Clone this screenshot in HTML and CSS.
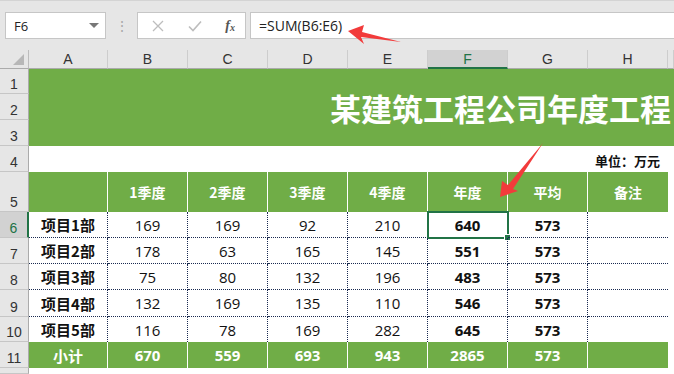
FILE: index.html
```html
<!DOCTYPE html>
<html lang="zh-CN">
<head>
  <meta charset="UTF-8" />
  <title>年度工程统计</title>
  <link rel="stylesheet" href="styles.css">
</head>
<body>

  <div class="toolbar">
    <div class="name-box">
      <span>F6</span>
      <span class="caret"></span>
    </div>
    <div class="grip">⋮</div>
    <div class="fx-buttons">
      <svg width="12" height="12" viewBox="0 0 12 12"><path d="M1 1L11 11M11 1L1 11" stroke="#bdbdbd" stroke-width="1.3" fill="none"/></svg>
      <svg width="14" height="12" viewBox="0 0 14 12"><path d="M1 6.5L5 10.5L13 1.5" stroke="#bdbdbd" stroke-width="1.6" fill="none"/></svg>
      <span class="fx">f<sub>x</sub></span>
    </div>
    <div class="formula">=SUM(B6:E6)</div>
  </div>

  <div class="sheet">
    <div class="corner"><span class="corner-tri"></span></div>
    <div class="col-head">A</div>
    <div class="col-head">B</div>
    <div class="col-head">C</div>
    <div class="col-head">D</div>
    <div class="col-head">E</div>
    <div class="col-head active">F</div>
    <div class="col-head">G</div>
    <div class="col-head">H</div>
    <div class="col-head"></div>

    <div class="row-head">1</div>
    <div class="title">某建筑工程公司年度工程</div>
    <div class="row-head">2</div>
    <div class="row-head">3</div>

    <div class="row-head">4</div>
    <div class="unit">单位：万元</div>

    <div class="row-head">5</div>
    <div class="hd"></div>
    <div class="hd">1季度</div>
    <div class="hd">2季度</div>
    <div class="hd">3季度</div>
    <div class="hd">4季度</div>
    <div class="hd">年度</div>
    <div class="hd">平均</div>
    <div class="hd last">备注</div>
    <div class="blank"></div>

    <div class="row-head active">6</div>
    <div class="c name">项目1部</div>
    <div class="c">169</div>
    <div class="c">169</div>
    <div class="c">92</div>
    <div class="c">210</div>
    <div class="c bold selected">640<span class="handle"></span></div>
    <div class="c bold">573</div>
    <div class="c last"></div>
    <div class="blank"></div>

    <div class="row-head">7</div>
    <div class="c name">项目2部</div>
    <div class="c">178</div>
    <div class="c">63</div>
    <div class="c">165</div>
    <div class="c">145</div>
    <div class="c bold">551</div>
    <div class="c bold">573</div>
    <div class="c last"></div>
    <div class="blank"></div>

    <div class="row-head">8</div>
    <div class="c name">项目3部</div>
    <div class="c">75</div>
    <div class="c">80</div>
    <div class="c">132</div>
    <div class="c">196</div>
    <div class="c bold">483</div>
    <div class="c bold">573</div>
    <div class="c last"></div>
    <div class="blank"></div>

    <div class="row-head">9</div>
    <div class="c name">项目4部</div>
    <div class="c">132</div>
    <div class="c">169</div>
    <div class="c">135</div>
    <div class="c">110</div>
    <div class="c bold">546</div>
    <div class="c bold">573</div>
    <div class="c last"></div>
    <div class="blank"></div>

    <div class="row-head">10</div>
    <div class="c name end">项目5部</div>
    <div class="c end">116</div>
    <div class="c end">78</div>
    <div class="c end">169</div>
    <div class="c end">282</div>
    <div class="c bold end">645</div>
    <div class="c bold end">573</div>
    <div class="c last end"></div>
    <div class="blank"></div>

    <div class="row-head">11</div>
    <div class="hd total">小计</div>
    <div class="hd total">670</div>
    <div class="hd total">559</div>
    <div class="hd total">693</div>
    <div class="hd total">943</div>
    <div class="hd total">2865</div>
    <div class="hd total">573</div>
    <div class="hd total last"></div>
    <div class="blank"></div>

    <div class="row-head"></div>
  </div>

  <!-- 红色箭头标注 -->
  <svg class="arrows" width="674" height="374" viewBox="0 0 674 374">
    <polygon points="348,31 364,25 362,32 401,42 361,37 364,44" fill="#f23b3b"/>
    <polygon points="500,197 502,181 508,185 543,143 513,189 518,191" fill="#f23b3b"/>
  </svg>

</body>
</html>
```

FILE: styles.css
```css
body {
  margin: 0;
  width: 674px;
  height: 374px;
  overflow: hidden;
  background-color: #e6e6e6;
  font-family: "Open Sans", "Noto Sans CJK SC", sans-serif;
  position: relative;
}

.toolbar {
  display: flex;
  align-items: center;
  height: 50px;
  padding-left: 5px;
  border-top: 1px solid #d4d4d4;
  box-sizing: border-box;
}

.name-box {
  width: 101px;
  height: 27px;
  box-sizing: border-box;
  background-color: white;
  border: 1px solid #c6c6c6;
  display: flex;
  align-items: center;
  justify-content: space-between;
  padding: 0 6px 0 8px;
  font-size: 13px;
  color: #222;
}

.caret {
  width: 0;
  height: 0;
  border-left: 5px solid transparent;
  border-right: 5px solid transparent;
  border-top: 5px solid #777;
}

.grip {
  width: 31px;
  text-align: center;
  color: #a9a9a9;
  font-size: 14px;
}

.fx-buttons {
  width: 109px;
  height: 27px;
  box-sizing: border-box;
  background-color: white;
  border: 1px solid #c6c6c6;
  display: flex;
  align-items: center;
  justify-content: space-between;
  padding: 0 10px 0 14px;
}

.fx {
  font-family: "Liberation Serif", serif;
  font-style: italic;
  font-weight: bold;
  font-size: 14px;
  color: #555;
}

.fx sub {
  font-size: 10px;
  vertical-align: -1px;
}

.formula {
  flex: 1;
  margin-left: 4px;
  height: 27px;
  box-sizing: border-box;
  background-color: white;
  border: 1px solid #c6c6c6;
  border-right: none;
  display: flex;
  align-items: center;
  padding-left: 8px;
  font-size: 14px;
  color: #222;
}

.sheet {
  display: grid;
  grid-template-columns: 29px 79px repeat(7, 80px) 1fr;
  grid-template-rows: 19px 25px 26px 26px 26px 40px 26px 26px 26px 27px 25px 26px 1fr;
  height: 324px;
  background-color: white;
}

.corner {
  background-color: #e6e6e6;
  border-right: 1px solid #bcbcbc;
  border-bottom: 1px solid #ababab;
  position: relative;
}

.corner-tri {
  position: absolute;
  right: 4px;
  bottom: 3px;
  width: 0;
  height: 0;
  border-left: 11px solid transparent;
  border-bottom: 11px solid #b7b7b7;
}

.col-head {
  background-color: #e6e6e6;
  border-right: 1px solid #cdcdcd;
  border-bottom: 1px solid #ababab;
  display: flex;
  align-items: center;
  justify-content: center;
  font-family: "Liberation Sans", sans-serif;
  font-size: 14px;
  color: #333;
}

.col-head.active {
  background-color: #d2d2d2;
  color: #217346;
  border-bottom: 2px solid #217346;
}

.row-head {
  grid-column: 1;
  background-color: #e6e6e6;
  border-right: 1px solid #ababab;
  border-bottom: 1px solid #c6c6c6;
  display: flex;
  align-items: flex-end;
  justify-content: center;
  padding-bottom: 1px;
  font-family: "Liberation Sans", sans-serif;
  font-size: 14px;
  color: #333;
  box-sizing: border-box;
}

.row-head.active {
  background-color: #d2d2d2;
  color: #217346;
  border-right: 2px solid #217346;
}

.title {
  grid-column: 2 / -1;
  grid-row: span 3;
  background-color: #70ad47;
  display: flex;
  align-items: center;
  padding-left: 301px;
  white-space: nowrap;
  overflow: hidden;
  font-family: "Noto Sans CJK SC", sans-serif;
  font-weight: bold;
  font-size: 31px;
  line-height: 1;
  color: white;
}

.unit {
  grid-column: 2 / 10;
  display: flex;
  align-items: center;
  justify-content: flex-end;
  padding: 3px 8px 0 0;
  font-family: "Noto Sans CJK SC", sans-serif;
  font-weight: bold;
  font-size: 13px;
  color: #111;
}

.hd {
  background-color: #70ad47;
  border-right: 1px solid white;
  display: flex;
  align-items: center;
  justify-content: center;
  font-family: "Noto Sans CJK SC", "Open Sans", sans-serif;
  font-weight: bold;
  font-size: 14px;
  color: white;
}

.hd.total {
  font-family: "Open Sans", "Noto Sans CJK SC", sans-serif;
  font-size: 15px;
}

.hd.last {
  border-right: none;
}

.blank {
  background-color: white;
}

.c {
  border-right: 1px dotted #1a2a50;
  border-bottom: 1px dotted #1a2a50;
  display: flex;
  align-items: center;
  justify-content: center;
  font-size: 15px;
  color: #111;
  position: relative;
}

.c.end {
  border-bottom: none;
}

.c.last {
  border-right: none;
}

.c.name {
  font-family: "Noto Sans CJK SC", sans-serif;
  font-weight: bold;
  font-size: 15px;
}

.c.bold {
  font-weight: bold;
}

.c.selected {
  outline: 2px solid #217346;
  outline-offset: -1px;
}

.handle {
  position: absolute;
  right: -4px;
  bottom: -4px;
  width: 5px;
  height: 5px;
  background-color: #217346;
  border: 1px solid white;
}

.arrows {
  position: absolute;
  left: 0;
  top: 0;
  pointer-events: none;
}
```
